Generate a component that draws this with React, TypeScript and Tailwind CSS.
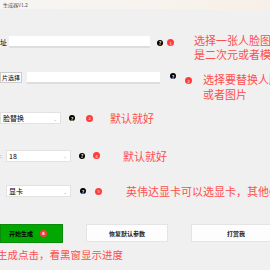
const font = { fontFamily: '"Noto Sans CJK SC", "Liberation Sans", sans-serif' }

function Help() {
  return (
    <span className="flex h-[6px] w-[6px] shrink-0 items-center justify-center rounded-full bg-black text-[5px] font-bold leading-none text-white">
      ?
    </span>
  )
}

function Dot({ n }: { n: number }) {
  return (
    <span className="flex h-[7px] w-[7px] shrink-0 items-center justify-center rounded-full bg-[#ff3b3b] text-[4px] leading-none text-white">
      {n}
    </span>
  )
}

function Select({ value, className }: { value: string; className: string }) {
  return (
    <div
      className={`flex h-[12px] shrink-0 items-center justify-between border border-[#e2e2e2] bg-white pl-[2px] pr-[3px] text-[7px] text-black ${className}`}
    >
      <span className="whitespace-nowrap">{value}</span>
      <span className="text-[5px] text-[#bbb]">⌄</span>
    </div>
  )
}

export default function App() {
  return (
    <div
      className="relative h-[270px] w-[270px] overflow-hidden bg-[#f0f0f0]"
      style={font}
    >
      {/* Title bar */}
      <div className="flex h-[9px] items-center bg-gradient-to-r from-[#f7f6f4] to-[#f8f0e8] pl-[3px] text-[5px] text-[#555]">
        生成器V1.2
      </div>

      {/* Row 1 */}
      <div className="mt-[27px] flex items-start">
        <span className="mt-[2px] w-[9px] shrink-0 text-[7px] leading-[8px] text-black">址</span>
        <div className="h-[12px] w-[141px] shrink-0 border-b-2 border-[#ddd] bg-white" />
        <div className="ml-[7px] mt-[3px] flex shrink-0 items-center gap-[4px]">
          <Help />
          <Dot n={1} />
        </div>
        <p className="ml-[20px] mt-[-3px] shrink-0 whitespace-nowrap text-[11px] leading-[14px] text-[#ff4d4d]">
          选择一张人脸图片
          <br />
          是二次元或者模特
        </p>
      </div>

      {/* Row 2 */}
      <div className="mt-[11px] flex items-start">
        <span className="h-[11px] shrink-0 whitespace-nowrap border border-[#ccc] bg-[#fdfdfd] px-[1px] text-[6px] leading-[9px] text-black">
          片选择
        </span>
        <div className="ml-[5px] h-[12px] w-[133px] shrink-0 border-b-2 border-[#ddd] bg-white" />
        <div className="ml-[10px] mt-[1px] flex shrink-0 items-start">
          <Help />
          <span className="ml-[9px] mt-[4px]">
            <Dot n={2} />
          </span>
        </div>
        <p className="ml-[11px] shrink-0 whitespace-nowrap text-[11px] leading-[15px] text-[#ff4d4d]">
          选择要替换人脸
          <br />
          或者图片
        </p>
      </div>

      {/* Row 3 */}
      <div className="mt-[8px] flex items-center">
        <Select value="脸替换" className="w-[61px]" />
        <span className="ml-[8px]">
          <Help />
        </span>
        <span className="ml-[11px]">
          <Dot n={3} />
        </span>
        <span className="ml-[17px] whitespace-nowrap text-[11px] text-[#ff4d4d]">默认就好</span>
      </div>

      {/* Row 4 */}
      <div className="mt-[21px] flex items-center">
        <span className="w-[6px] shrink-0 text-[6px] text-[#888]">:</span>
        <Select value="18" className="w-[65px]" />
        <span className="ml-[8px]">
          <Help />
        </span>
        <span className="ml-[8px]">
          <Dot n={4} />
        </span>
        <span className="ml-[23px] whitespace-nowrap text-[11px] text-[#ff4d4d]">默认就好</span>
      </div>

      {/* Row 5 */}
      <div className="mt-[19px] flex items-center">
        <span className="w-[6px] shrink-0" />
        <Select value="显卡" className="w-[65px]" />
        <span className="ml-[9px]">
          <Help />
        </span>
        <span className="ml-[9px]">
          <Dot n={5} />
        </span>
        <span className="ml-[24px] whitespace-nowrap text-[11px] text-[#ff4d4d]">
          英伟达显卡可以选显卡，其他CPU
        </span>
      </div>

      {/* Buttons */}
      <div className="mt-[24px] flex items-center">
        <button className="flex h-[19px] w-[63px] shrink-0 items-center border border-[#0b8a0b] bg-[#00a800] pl-[8px] text-[6px] font-bold text-black">
          开始生成
          <span className="ml-[7px]">
            <Dot n={6} />
          </span>
        </button>
        <button className="ml-[23px] h-[18px] w-[82px] shrink-0 border border-[#e4e4e4] bg-[#fdfdfd] text-[6px] font-bold text-[#222]">
          恢复默认参数
        </button>
        <button className="ml-[23px] h-[18px] w-[90px] shrink-0 border border-[#e4e4e4] bg-[#fdfdfd] text-[6px] font-bold text-[#222]">
          打赏我
        </button>
      </div>

      <p className="ml-[-3px] mt-[5px] whitespace-nowrap text-[10.5px] leading-[14px] text-[#ff4d4d]">
        生成点击，看黑窗显示进度
      </p>
    </div>
  )
}
